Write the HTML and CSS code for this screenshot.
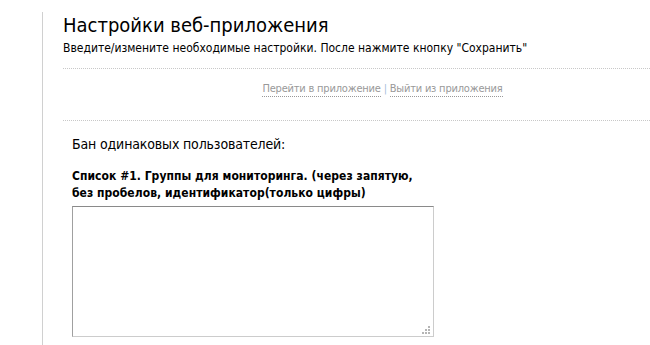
FILE: index.html
```html
<!DOCTYPE html>
<html lang="ru">
<head>
<meta charset="utf-8">
<title>Настройки веб-приложения</title>
<link rel="stylesheet" href="styles.css">
</head>
<body>
<div class="page">
  <div class="content">
    <h1 class="title">Настройки веб-приложения</h1>
    <p class="subtitle">Введите/измените необходимые настройки. После нажмите кнопку "Сохранить"</p>
    <hr class="sep">
    <nav class="links">
      <a class="link" href="#">Перейти в приложение</a> <span class="bar">|</span> <a class="link" href="#">Выйти из приложения</a>
    </nav>
    <hr class="sep sep-2">
    <section class="block">
      <h2 class="block-title">Бан одинаковых пользователей:</h2>
      <label class="field-label" for="groups">Список #1. Группы для мониторинга. (через запятую,<br>без пробелов, идентификатор(только цифры)</label>
      <div class="area-wrap">
        <textarea id="groups" class="area"></textarea>
        <svg class="grip" width="8" height="8" viewBox="0 0 8 8" aria-hidden="true">
          <rect x="6" y="0" width="2" height="2" fill="#b5b5b5"/>
          <rect x="3" y="3" width="2" height="2" fill="#b5b5b5"/>
          <rect x="6" y="3" width="2" height="2" fill="#b5b5b5"/>
          <rect x="0" y="6" width="2" height="2" fill="#b5b5b5"/>
          <rect x="3" y="6" width="2" height="2" fill="#b5b5b5"/>
          <rect x="6" y="6" width="2" height="2" fill="#b5b5b5"/>
        </svg>
      </div>
    </section>
  </div>
</div>
</body>
</html>
```
FILE: styles.css
```css
html, body {
  margin: 0;
  padding: 0;
  background: #fff;
  overflow: hidden;
}
body {
  font-family: "DejaVu Sans Condensed", "DejaVu Sans", Verdana, sans-serif;
  color: #000;
}
.page {
  margin-left: 42px;
  border-left: 1px solid #d0d0d0;
  min-height: 345px;
  padding-left: 20px;
}
.content {
  width: auto;
}
.title {
  margin: 12px 0 0;
  font-size: 20px;
  line-height: 26px;
  font-weight: normal;
  color: #000;
}
.subtitle {
  margin: 3px 0 0;
  font-size: 12px;
  line-height: 14px;
}
.sep {
  margin: 13px 0 0;
  border: 0;
  border-top: 1px dotted #c8c8c8;
  height: 0;
}
.sep-2 {
  margin-top: 24px;
}
.links {
  margin-top: 13px;
  padding-left: 52px;
  text-align: center;
  font-size: 11px;
  line-height: 14px;
  letter-spacing: -0.2px;
  color: #999;
}
.link {
  color: #999;
  text-decoration: none;
  padding-bottom: 1px;
  border-bottom: 1px dotted #999;
}
.bar {
  color: #a8c0dc;
}
.block {
  padding-left: 9px;
}
.block-title {
  margin: 15px 0 0;
  font-size: 14px;
  line-height: 17px;
  font-weight: normal;
  letter-spacing: -0.15px;
}
.field-label {
  display: block;
  margin-top: 15px;
  font-size: 12px;
  line-height: 17px;
  font-weight: bold;
  letter-spacing: 0.04px;
}
.area-wrap {
  position: relative;
  width: 362px;
  height: 131px;
  margin-top: 4px;
}
.area {
  display: block;
  box-sizing: border-box;
  width: 362px;
  height: 131px;
  margin: 0;
  padding: 2px;
  border: 1px solid;
  border-color: #8a8a8a #cccccc #cccccc #a0a0a0;
  resize: none;
  outline: none;
  background: #fff;
}
.grip {
  position: absolute;
  right: 4px;
  bottom: 3px;
}
```
